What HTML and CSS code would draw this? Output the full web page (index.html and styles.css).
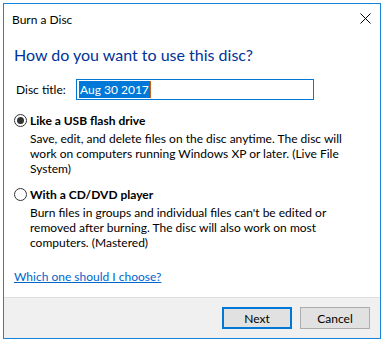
FILE: index.html
```html
<!DOCTYPE html>
<html lang="en">
<head>
    <meta charset="UTF-8">
    <title>Burn a Disc</title>
    <link rel="stylesheet" href="styles.css">
</head>
<body>

    <div class="window">
        <!-- title bar -->
        <div class="titlebar">
            <span class="caption">Burn a Disc</span>
            <svg class="close" width="11" height="11" viewBox="0 0 11 11">
                <path d="M0.5 0.5 L10.5 10.5 M10.5 0.5 L0.5 10.5" stroke="#000" stroke-width="1" fill="none"/>
            </svg>
        </div>

        <div class="content">
            <h1>How do you want to use this disc?</h1>

            <div class="title-row">
                <label class="title-label">Disc title:</label>
                <div class="textbox"><span class="selected">Aug 30 2017</span></div>
            </div>

            <div class="option">
                <div class="option-head">
                    <span class="radio checked"></span>
                    <span class="option-name">Like a USB flash drive</span>
                </div>
                <p class="option-desc">Save, edit, and delete files on the disc anytime. The disc will work on computers running Windows XP or later. (Live File System)</p>
            </div>

            <div class="option">
                <div class="option-head">
                    <span class="radio"></span>
                    <span class="option-name">With a CD/DVD player</span>
                </div>
                <p class="option-desc">Burn files in groups and individual files can't be edited or removed after burning. The disc will also work on most computers. (Mastered)</p>
            </div>

            <a class="help-link" href="#">Which one should I choose?</a>
        </div>

        <div class="footer">
            <button class="btn default">Next</button>
            <button class="btn">Cancel</button>
        </div>
    </div>

</body>
</html>
```

FILE: styles.css
```css
* {
    margin: 0;
    padding: 0;
    box-sizing: border-box;
}

body {
    font-family: 'Lato', 'Noto Sans', sans-serif;
    font-size: 12px;
    color: #000;
    background-color: #fff;
    padding: 3px;
}

.window {
    width: 378px;
    height: 336px;
    border: 1px solid #1883d7;
    background-color: #fff;
    display: flex;
    flex-direction: column;
}

.titlebar {
    height: 30px;
    display: flex;
    align-items: center;
    justify-content: space-between;
    padding: 0 9px 0 8px;
}

.caption {
    font-size: 12px;
    line-height: 15px;
}

.close {
    display: block;
    margin-top: -2px;
}

.content {
    flex: 1;
    padding: 10px 10px 0 10px;
}

h1 {
    font-size: 16px;
    font-weight: normal;
    line-height: 21px;
    color: #003399;
}

.title-row {
    display: flex;
    align-items: center;
    margin-top: 14px;
}

.title-label {
    width: 62px;
    padding-left: 2px;
    line-height: 15px;
}

.textbox {
    width: 238px;
    height: 21px;
    border: 1px solid #0078d7;
    padding: 1px 2px;
}

.selected {
    display: inline-block;
    line-height: 17px;
    height: 17px;
    padding: 0 1px;
    background-color: #0078d7;
    color: #fff;
    border-right: 1px solid #c8641e;
}

.option {
    margin-top: 13px;
}

.option + .option {
    margin-top: 11px;
}

.option-head {
    display: flex;
    align-items: center;
    line-height: 15px;
}

.radio {
    width: 13px;
    height: 13px;
    border: 1px solid #333;
    border-radius: 50%;
    margin-right: 3px;
    position: relative;
    background-color: #fff;
}

.radio.checked::after {
    content: "";
    position: absolute;
    left: 2px;
    top: 2px;
    width: 7px;
    height: 7px;
    border-radius: 50%;
    background-color: #333;
}

.option-name {
    font-weight: bold;
}

.option-desc {
    width: 325px;
    margin: 3px 0 0 16px;
    line-height: 15px;
}

.help-link {
    display: inline-block;
    margin-top: 19px;
    line-height: 15px;
    color: #0066cc;
    text-decoration: underline;
}

.footer {
    height: 41px;
    background-color: #f0f0f0;
    border-top: 1px solid #dfdfdf;
    display: flex;
    justify-content: flex-end;
    align-items: flex-start;
    gap: 8px;
    padding: 9px 10px 0 0;
}

.btn {
    width: 70px;
    height: 22px;
    font-family: inherit;
    font-size: 12px;
    color: #000;
    background-color: #e1e1e1;
    border: 1px solid #adadad;
}

.btn.default {
    border: 2px solid #0078d7;
}
```
